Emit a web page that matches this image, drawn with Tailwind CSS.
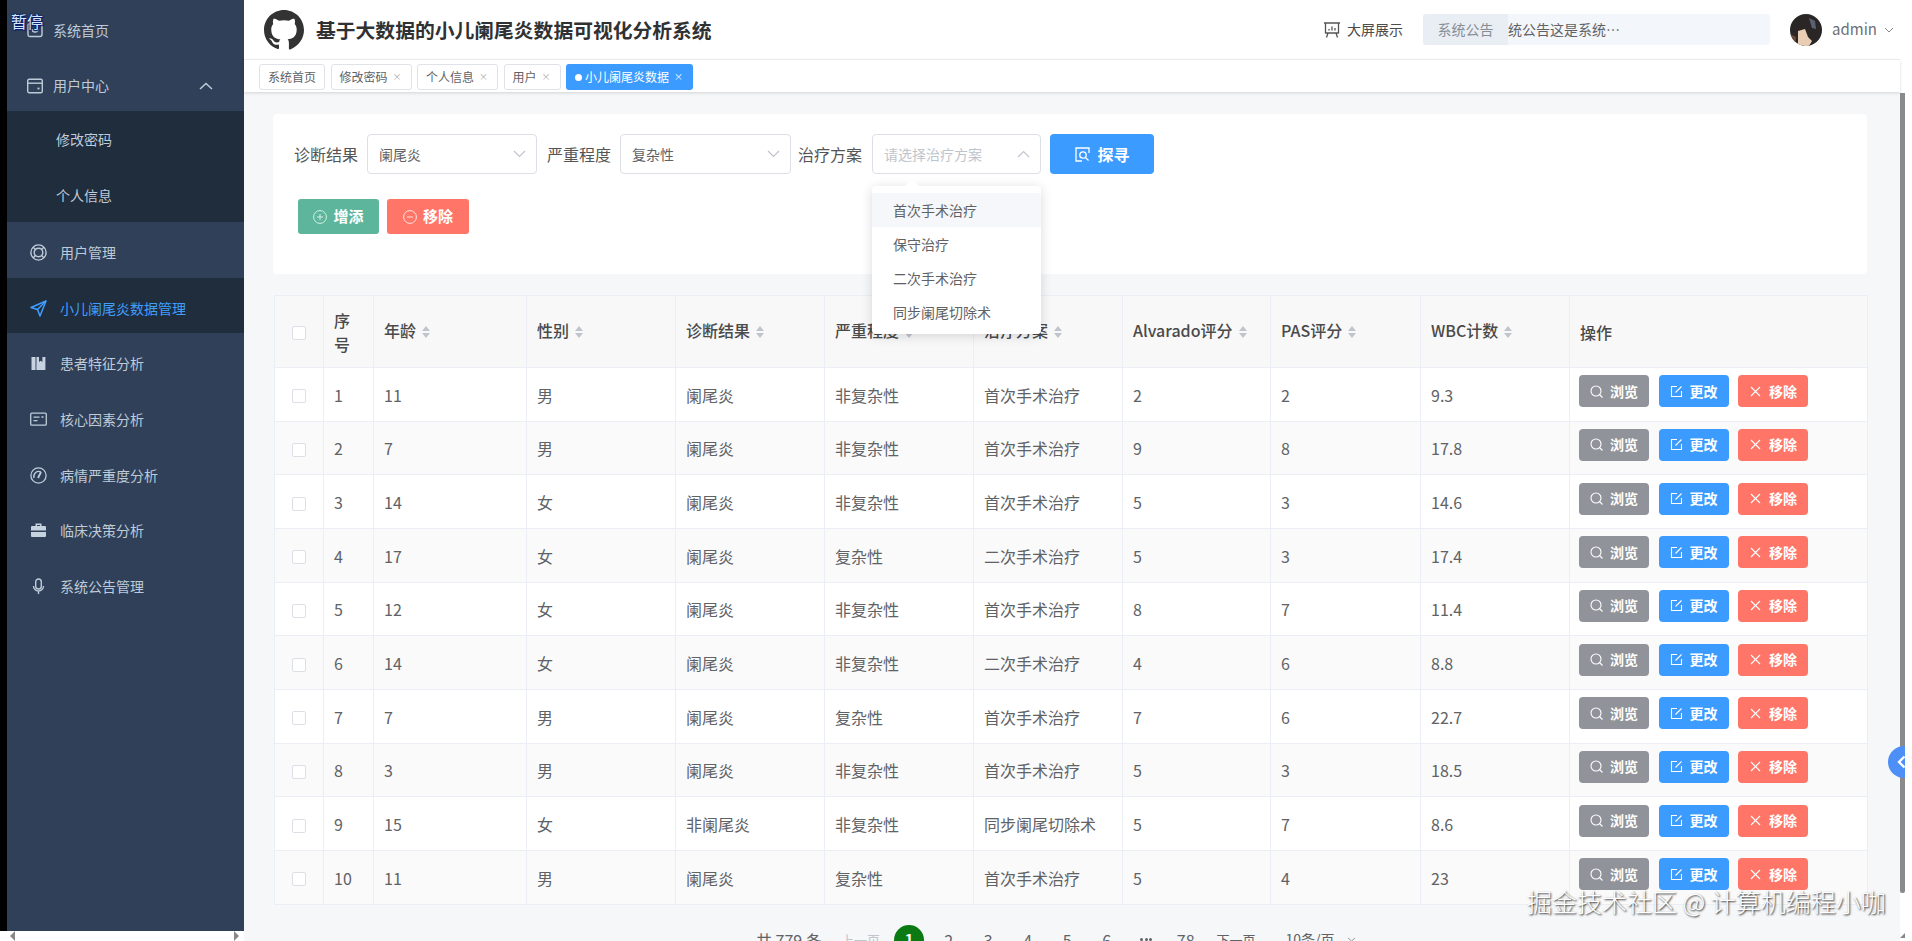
<!DOCTYPE html>
<html lang="zh-CN">
<head>
    <meta charset="UTF-8">
    <title>基于大数据的小儿阑尾炎数据可视化分析系统</title>
    <script src="https://cdn.jsdelivr.net/npm/@tailwindcss/browser@4"></script>
</head>
<body class="font-['Noto_Sans_CJK_SC','Noto_Sans',sans-serif] bg-white">
<div class="relative flex w-[1912px] h-[941px] overflow-hidden">

    <!-- left column -->
    <div class="w-[244px] h-full flex flex-col shrink-0">
        <div class="flex flex-1 min-h-0">
            <div class="w-[7px] bg-black"></div>
            <aside class="w-[237px] bg-[#2f4058] text-[14px] text-[#bfcbd9]">
                <div class="h-[55.7px] flex items-center pl-[20px] gap-[10px] pt-[5px]">
                    <svg class="w-[16px] h-[16px]" viewBox="0 0 16 16" fill="none" stroke="#bfcbd9" stroke-width="1.4"><rect x="1" y="1.5" width="14" height="13" rx="2"/><path d="M5 7c0 4 6 4 6 0"/></svg>
                    <span>系统首页</span>
                </div>
                <div class="h-[55.3px] flex items-center pl-[20px] gap-[10px] pt-[5px]">
                    <svg class="w-[16px] h-[16px]" viewBox="0 0 16 16" fill="none" stroke="#bfcbd9" stroke-width="1.4"><rect x="0.7" y="1.2" width="14.6" height="13.6" rx="1.5"/><path d="M1 5.2h14"/><path d="M10.5 10.5h2" stroke-width="1.8"/></svg>
                    <span>用户中心</span>
                    <svg class="w-[14px] h-[8px] ml-[80px]" viewBox="0 0 14 8" fill="none" stroke="#bfcbd9" stroke-width="1.5"><path d="M1 7l6-5.5L13 7"/></svg>
                </div>
                <div class="bg-[#1f2d3d] h-[111px]">
                    <div class="h-[55.5px] flex items-center pl-[49px] pt-[2px]">修改密码</div>
                    <div class="h-[55.5px] flex items-center pl-[49px] pt-[2px]">个人信息</div>
                </div>
                <div class="h-[56px] flex items-center pl-[23px] gap-[13px] pt-[5px]">
                    <svg class="w-[17px] h-[17px]" viewBox="0 0 17 17" fill="none" stroke="#bfcbd9" stroke-width="1.4"><circle cx="8.5" cy="8.5" r="7.6"/><circle cx="8.5" cy="8.5" r="4.3"/><path d="M3.2 3.2l2.3 2.3M13.8 3.2l-2.3 2.3M3.2 13.8l2.3-2.3M13.8 13.8l-2.3-2.3"/></svg>
                    <span>用户管理</span>
                </div>
                <div class="h-[55.5px] flex items-center pl-[23px] gap-[13px] bg-[#1f2d3d] text-[#409eff] pt-[5px]">
                    <svg class="w-[17px] h-[17px]" viewBox="0 0 17 17" fill="none" stroke="#409eff" stroke-width="1.5" stroke-linejoin="round"><path d="M16 1L1 7.5l6.5 2L10 16z"/><path d="M7.5 9.5L16 1"/></svg>
                    <span>小儿阑尾炎数据管理</span>
                </div>
                <div class="h-[55.7px] flex items-center pl-[23px] gap-[13px] pt-[4px]">
                    <svg class="w-[17px] h-[17px]" viewBox="0 0 17 17" fill="#c6d2e0"><path d="M1.5 2h4v13h-4zM6.5 2h2.5v5l1.7-1.3L12.4 7V2h3v13h-9z"/></svg>
                    <span>患者特征分析</span>
                </div>
                <div class="h-[55.7px] flex items-center pl-[23px] gap-[13px] pt-[4px]">
                    <svg class="w-[17px] h-[17px]" viewBox="0 0 17 17" fill="none" stroke="#bfcbd9" stroke-width="1.3"><rect x="0.7" y="2.2" width="15.6" height="12" rx="1"/><path d="M3.5 6.2h6M3.5 9.6h4M11.5 6h2" /></svg>
                    <span>核心因素分析</span>
                </div>
                <div class="h-[55.7px] flex items-center pl-[23px] gap-[13px] pt-[5px]">
                    <svg class="w-[17px] h-[17px]" viewBox="0 0 17 17" fill="none" stroke="#bfcbd9" stroke-width="1.3"><circle cx="8.5" cy="8.5" r="7.6"/><path d="M4 11a5 5 0 0 1 7-6"/><path d="M8 11l3-6" stroke-width="1.8"/></svg>
                    <span>病情严重度分析</span>
                </div>
                <div class="h-[55.7px] flex items-center pl-[23px] gap-[13px] pt-[5px]">
                    <svg class="w-[17px] h-[17px]" viewBox="0 0 17 17" fill="#c6d2e0"><path d="M5.5 1.5h6v2.5h3.5a1 1 0 0 1 1 1v3.5H1V5a1 1 0 0 1 1-1h3.5zM7 3v1h3V3zM1 10h15v4a1 1 0 0 1-1 1H2a1 1 0 0 1-1-1z"/></svg>
                    <span>临床决策分析</span>
                </div>
                <div class="h-[55.7px] flex items-center pl-[23px] gap-[13px] pt-[4px]">
                    <svg class="w-[17px] h-[17px]" viewBox="0 0 17 17" fill="none" stroke="#bfcbd9" stroke-width="1.4"><rect x="5.7" y="1" width="5.6" height="10" rx="2.8"/><path d="M3.5 8a5 5 0 0 0 10 0M8.5 13v3"/></svg>
                    <span>系统公告管理</span>
                </div>
            </aside>
        </div>
        <div class="h-[10px] bg-white flex items-center justify-between pl-[10px] pr-[5px]">
            <div class="w-0 h-0 border-y-[5px] border-y-transparent border-r-[5px] border-r-[#888]"></div>
            <div class="w-0 h-0 border-y-[5px] border-y-transparent border-l-[5px] border-l-[#888]"></div>
        </div>
    </div>

    <!-- main column -->
    <main class="w-[1656px] h-full flex flex-col bg-[#f5f7f9] shrink-0">
        <header class="h-[60px] bg-white border-b border-[#eef0f3] flex items-center pl-[20px] shrink-0 whitespace-nowrap">
            <svg class="w-[40px] h-[40px] shrink-0" viewBox="0 0 24 24" fill="#333"><path d="M12 0C5.37 0 0 5.37 0 12c0 5.3 3.438 9.8 8.205 11.385.6.113.82-.258.82-.577 0-.285-.01-1.04-.015-2.04-3.338.724-4.042-1.61-4.042-1.61C4.422 18.07 3.633 17.7 3.633 17.7c-1.087-.744.084-.729.084-.729 1.205.084 1.838 1.236 1.838 1.236 1.07 1.835 2.809 1.305 3.495.998.108-.776.417-1.305.76-1.605-2.665-.3-5.466-1.332-5.466-5.93 0-1.31.465-2.38 1.235-3.22-.135-.303-.54-1.523.105-3.176 0 0 1.005-.322 3.3 1.23.96-.267 1.98-.399 3-.405 1.02.006 2.04.138 3 .405 2.28-1.552 3.285-1.23 3.285-1.23.645 1.653.24 2.873.12 3.176.765.84 1.23 1.91 1.23 3.22 0 4.61-2.805 5.625-5.475 5.92.42.36.81 1.096.81 2.22 0 1.606-.015 2.896-.015 3.286 0 .315.21.69.825.57C20.565 21.795 24 17.295 24 12c0-6.63-5.37-12-12-12z"/></svg>
            <h1 class="ml-[12px] w-[400px] text-[19.8px] font-bold text-[#303133]">基于大数据的小儿阑尾炎数据可视化分析系统</h1>
            <svg class="ml-[607px] w-[18px] h-[18px] shrink-0" viewBox="0 0 18 18" fill="none" stroke="#555" stroke-width="1.3"><path d="M1 2h16M2.5 2v10h13V2M5 12l-1.5 4.5M13 12l1.5 4.5"/><path d="M6 9.5V8M9 9.5V5.5M12 9.5V7"/></svg>
            <span class="ml-[6px] text-[14px] text-[#4c4c4c]">大屏展示</span>
            <div class="ml-[20px] w-[347px] h-[31px] bg-[#f3f6fa] rounded-[3px] flex items-center text-[14px] shrink-0">
                <span class="w-[85px] h-full bg-[#e9eef4] text-[#888d94] flex items-center justify-center rounded-l-[3px]">系统公告</span>
                <span class="text-[#606266]">统公告这是系统⋯</span>
            </div>
            <svg class="ml-[20px] w-[32px] h-[32px] shrink-0" viewBox="0 0 32 32"><defs><clipPath id="av"><circle cx="16" cy="16" r="16"/></clipPath></defs><g clip-path="url(#av)"><rect width="32" height="32" fill="#2b2626"/><path d="M8 17l7-2 3 8 4 4-3 5H8z" fill="#e8cdb4"/><path d="M19 4l6 3 1 8-4-1z" fill="#5a6272"/><path d="M0 20l6 3-1 9H0z" fill="#6b4a3a"/></g></svg>
            <span class="ml-[10px] text-[15px] text-[#6b6f75]">admin</span>
            <svg class="ml-[7px] w-[10px] h-[6px] shrink-0" viewBox="0 0 10 6" fill="none" stroke="#888" stroke-width="1"><path d="M1 1l4 4 4-4"/></svg>
        </header>

        <div class="h-[32px] bg-white flex items-start pt-[4px] pl-[15px] gap-[5.5px] text-[12px] text-[#606266] shadow-[0_1px_3px_rgba(0,0,0,0.15)] shrink-0 relative">
            <div class="h-[26px] border border-[#dfe3e8] rounded-[3px] bg-white flex items-center px-[8px]">系统首页</div>
            <div class="h-[26px] border border-[#dfe3e8] rounded-[3px] bg-white flex items-center pl-[8px] pr-[10px] gap-[5px]">修改密码<span class="w-[8px] text-[9px] text-[#aaa] text-center">×</span></div>
            <div class="h-[26px] border border-[#dfe3e8] rounded-[3px] bg-white flex items-center pl-[8px] pr-[10px] gap-[5px]">个人信息<span class="w-[8px] text-[9px] text-[#aaa] text-center">×</span></div>
            <div class="h-[26px] border border-[#dfe3e8] rounded-[3px] bg-white flex items-center pl-[8px] pr-[10px] gap-[5px]">用户<span class="w-[8px] text-[9px] text-[#aaa] text-center">×</span></div>
            <div class="h-[26px] rounded-[3px] bg-[#3c9bff] text-white flex items-center pl-[9px] pr-[11px]"><span class="w-[7px] h-[7px] rounded-full bg-white mr-[3px]"></span>小儿阑尾炎数据<span class="ml-[5px] w-[8px] text-[9px] text-center">×</span></div>
        </div>

        <div class="flex-1 min-h-0 overflow-hidden pt-[22px] pl-[29px] pr-[33px]">
            <!-- filters -->
            <section class="h-[160px] bg-white rounded-[4px] pt-[20px] pl-[21px]">
                <div class="flex items-center h-[40px] text-[16px] text-[#555]">
                    <label>诊断结果</label>
                    <div class="ml-[9px] w-[170px] h-[40px] border border-[#dcdfe6] rounded-[4px] flex items-center justify-between pl-[11px] pr-[10px] text-[14px] text-[#606266]">阑尾炎<svg class="w-[13px] h-[8px]" viewBox="0 0 13 8" fill="none" stroke="#c0c4cc" stroke-width="1.2"><path d="M1 1l5.5 5.5L12 1"/></svg></div>
                    <label class="ml-[10px]">严重程度</label>
                    <div class="ml-[9px] w-[171px] h-[40px] border border-[#dcdfe6] rounded-[4px] flex items-center justify-between pl-[11px] pr-[10px] text-[14px] text-[#606266]">复杂性<svg class="w-[13px] h-[8px]" viewBox="0 0 13 8" fill="none" stroke="#c0c4cc" stroke-width="1.2"><path d="M1 1l5.5 5.5L12 1"/></svg></div>
                    <label class="ml-[7px]">治疗方案</label>
                    <div class="relative ml-[10px] w-[169px] h-[40px] border border-[#dcdfe6] rounded-[4px] flex items-center justify-between pl-[11px] pr-[10px] text-[14px] text-[#c0c4cc]">请选择治疗方案<svg class="w-[13px] h-[8px]" viewBox="0 0 13 8" fill="none" stroke="#c0c4cc" stroke-width="1.2"><path d="M1 7l5.5-5.5L12 7"/></svg>
                        <div class="absolute left-[-1px] top-[51px] w-[169px] h-[148px] bg-white rounded-[4px] shadow-[0_2px_12px_rgba(0,0,0,0.15)] pt-[7px] z-10 text-[14px] text-[#606266]">
                            <div class="absolute left-[35px] top-[-5px] w-[10px] h-[10px] bg-white rotate-45"></div>
                            <div class="h-[34px] flex items-center pl-[21px] bg-[#f5f7fa]">首次手术治疗</div>
                            <div class="h-[34px] flex items-center pl-[21px]">保守治疗</div>
                            <div class="h-[34px] flex items-center pl-[21px]">二次手术治疗</div>
                            <div class="h-[34px] flex items-center pl-[21px]">同步阑尾切除术</div>
                        </div>
                    </div>
                    <button class="ml-[9px] w-[104px] h-[40px] rounded-[4px] bg-[#3c9bff] text-white font-bold flex items-center justify-center gap-[8px]">
                        <svg class="w-[15px] h-[15px]" viewBox="0 0 15 15" fill="none" stroke="#fff" stroke-width="1.3"><path d="M14 6V1H1v13h6"/><circle cx="8" cy="8" r="3.2"/><path d="M10.5 10.5l3 3"/></svg>
                        探寻
                    </button>
                </div>
                <div class="flex mt-[25px] ml-[4px] gap-[8px] text-[15px] font-bold text-white">
                    <button class="w-[81px] h-[35px] rounded-[3px] bg-[#5db59b] flex items-center justify-center gap-[6px]">
                        <svg class="w-[14px] h-[14px]" viewBox="0 0 14 14" fill="none" stroke="#d5efe6" stroke-width="1"><circle cx="7" cy="7" r="6.4"/><path d="M7 4v6M4 7h6"/></svg>增添
                    </button>
                    <button class="w-[82px] h-[35px] rounded-[3px] bg-[#ff7568] flex items-center justify-center gap-[6px]">
                        <svg class="w-[14px] h-[14px]" viewBox="0 0 14 14" fill="none" stroke="#ffe4e0" stroke-width="1"><circle cx="7" cy="7" r="6.4"/><path d="M4 7h6"/></svg>移除
                    </button>
                </div>
            </section>

            <!-- table -->
            <table class="mt-[21px] ml-[1px] w-[1593px] table-fixed border-collapse text-[16px] text-[#606266]">
                <colgroup>
                    <col class="w-[49px]"><col class="w-[50px]"><col class="w-[153px]"><col class="w-[149px]"><col class="w-[149px]"><col class="w-[149px]"><col class="w-[149px]"><col class="w-[148px]"><col class="w-[150px]"><col class="w-[149px]"><col class="w-[298px]">
                </colgroup>
                <thead id="thead" class="bg-[#f8f8f9] text-[#4a4a4a]"></thead>
                <tbody id="tbody"></tbody>
            </table>

            <!-- pagination -->
            <nav class="flex items-center h-[30px] mt-[20px] ml-[483px] text-[#606266]">
                <span class="w-[85px] text-[16px]">共 779 条</span>
                <span class="w-[48.5px] text-[13px] text-[#c0c4cc]">上一页</span>
                <span class="w-[39.5px] flex justify-center"><span class="w-[30px] h-[30px] rounded-full bg-[#0c7a12] text-white font-bold text-[15px] flex items-center justify-center">1</span></span>
                <span class="w-[39.5px] text-center">2</span>
                <span class="w-[39.5px] text-center">3</span>
                <span class="w-[39.5px] text-center">4</span>
                <span class="w-[39.5px] text-center">5</span>
                <span class="w-[39.5px] text-center">6</span>
                <span class="w-[39.5px] flex justify-center gap-[1.5px]"><i class="w-[3px] h-[3px] rounded-full bg-[#606266]"></i><i class="w-[3px] h-[3px] rounded-full bg-[#606266]"></i><i class="w-[3px] h-[3px] rounded-full bg-[#606266]"></i></span>
                <span class="w-[39.5px] text-center">78</span>
                <span class="ml-[11px] w-[69px] text-[13px]">下一页</span>
                <span class="text-[14px]">10条/页</span>
                <svg class="ml-[12px] w-[9px] h-[5px]" viewBox="0 0 9 5" fill="none" stroke="#999"><path d="M1 1l3.5 3L8 1"/></svg>
            </nav>
        </div>
    </main>

    <!-- page scrollbar -->
    <div class="w-[12px] h-full bg-white shrink-0 pt-[93px]">
        <div class="w-[5px] h-[800px] bg-[#8a8a8a] rounded-b-[2px]"></div>
    </div>

    <!-- overlays -->
    <div class="absolute left-[1888px] top-[746px] w-[32px] h-[32px] rounded-full bg-[#4d8ff7] flex items-center pl-[9px]">
        <svg class="w-[9px] h-[14px]" viewBox="0 0 9 14" fill="none" stroke="#fff" stroke-width="2.4"><path d="M7.5 1.5L2 7l5.5 5.5"/></svg>
    </div>
    <div class="absolute left-[1905px] top-[730px] w-[7px] h-[211px] bg-white"></div>
    <div class="absolute left-[1900px] top-[933px] w-0 h-0 border-l-[5px] border-l-transparent border-b-[5px] border-b-[#888]"></div>
    <div class="absolute left-[11px] top-[9px] text-[16px] text-[#d8e6ff] [text-shadow:0_0_2px_#001a70,0_0_2px_#001a70,1px_1px_1px_#001a70]">暂停</div>
    <div class="absolute left-[1527px] top-[884px] text-[25px] font-light leading-[34px] whitespace-nowrap text-white [text-shadow:1px_1px_2px_#222]">掘金技术社区 @ 计算机编程小咖</div>
</div>

<script>
    const rows = [
        [1, 11, '男', '阑尾炎', '非复杂性', '首次手术治疗', 2, 2, 9.3],
        [2, 7, '男', '阑尾炎', '非复杂性', '首次手术治疗', 9, 8, 17.8],
        [3, 14, '女', '阑尾炎', '非复杂性', '首次手术治疗', 5, 3, 14.6],
        [4, 17, '女', '阑尾炎', '复杂性', '二次手术治疗', 5, 3, 17.4],
        [5, 12, '女', '阑尾炎', '非复杂性', '首次手术治疗', 8, 7, 11.4],
        [6, 14, '女', '阑尾炎', '非复杂性', '二次手术治疗', 4, 6, 8.8],
        [7, 7, '男', '阑尾炎', '复杂性', '首次手术治疗', 7, 6, 22.7],
        [8, 3, '男', '阑尾炎', '非复杂性', '首次手术治疗', 5, 3, 18.5],
        [9, 15, '女', '非阑尾炎', '非复杂性', '同步阑尾切除术', 5, 7, 8.6],
        [10, 11, '男', '阑尾炎', '复杂性', '首次手术治疗', 5, 4, 23]
    ];
    const sortable = ['年龄', '性别', '诊断结果', '严重程度', '治疗方案', 'Alvarado评分', 'PAS评分', 'WBC计数'];

    const checkbox = '<div class="w-[14px] h-[14px] mx-auto border border-[#dcdfe6] rounded-[2px] bg-white"></div>';
    const caret = '<svg class="inline-block w-[8px] h-[12px] ml-[6px] align-[-1px]" viewBox="0 0 8 12" fill="#c0c4cc"><path d="M4 0l4 5H0zM4 12l4-5H0z"/></svg>';
    const th = 'border border-[#ebeef5] font-medium text-left px-[10px]';
    const td = 'border border-[#ebeef5] px-[10px]';

    document.getElementById('thead').innerHTML = `
        <tr class="h-[72px]">
            <th class="border border-[#ebeef5] pt-[3px]">${checkbox}</th>
            <th class="${th} leading-[24px]">序号</th>
            ${sortable.map(s => `<th class="${th} pb-[4px]">${s}${caret}</th>`).join('')}
            <th class="${th}">操作</th>
        </tr>`;

    document.getElementById('tbody').innerHTML = rows.map((r, i) => `
        <tr class="h-[53.67px] ${i % 2 ? 'bg-[#fafafa]' : 'bg-white'}">
            <td class="border border-[#ebeef5] pt-[4px]">${checkbox}</td>
            ${r.map(v => `<td class="${td} pt-[1px]">${v}</td>`).join('')}
            <td class="border border-[#ebeef5] pl-[9px] pb-[6px]">
                <div class="flex gap-[9.5px] text-[14px] font-bold text-white">
                    <button class="w-[70px] h-[32px] rounded-[4px] bg-[#909399] flex items-center justify-center gap-[7px]"><svg class="w-[13px] h-[13px]" viewBox="0 0 13 13" fill="none" stroke="#fff" stroke-width="1.1"><circle cx="6" cy="6" r="5"/><path d="M9.5 9.5l3 3"/></svg>浏览</button>
                    <button class="w-[70px] h-[32px] rounded-[4px] bg-[#3c9bff] flex items-center justify-center gap-[7px]"><svg class="w-[13px] h-[13px]" viewBox="0 0 13 13" fill="none" stroke="#fff" stroke-width="1.1"><path d="M7 1.5H1.5v10h10V6"/><path d="M5.5 7.5L11.5 1.5"/></svg>更改</button>
                    <button class="w-[70px] h-[32px] rounded-[4px] bg-[#ff7568] flex items-center justify-center gap-[7px]"><svg class="w-[13px] h-[13px]" viewBox="0 0 13 13" fill="none" stroke="#fff" stroke-width="1.1"><path d="M2 2l9 9M11 2l-9 9"/></svg>移除</button>
                </div>
            </td>
        </tr>`).join('');
</script>
</body>
</html>
